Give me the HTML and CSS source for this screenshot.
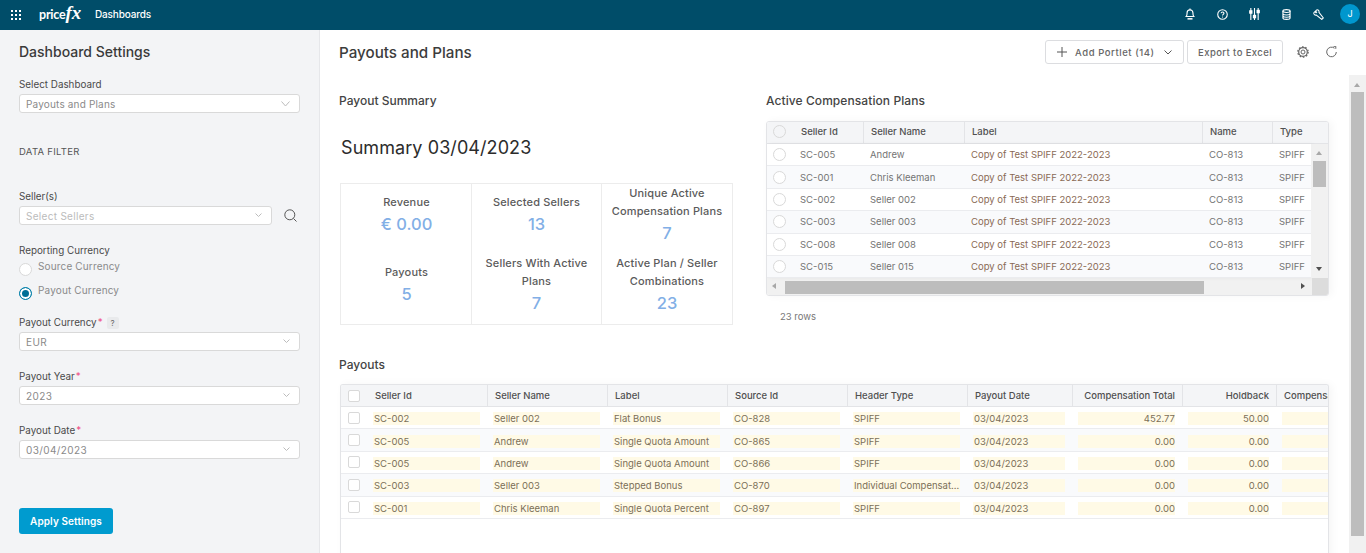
FILE: index.html
```html
<!DOCTYPE html>
<html lang="en">
<head>
<meta charset="utf-8">
<title>Dashboards</title>
<link rel="stylesheet" href="styles.css">
</head>
<body>
<header class="topbar">
  <svg class="apps" width="10" height="10" viewBox="0 0 10 10" fill="#fff"><rect x="0" y="0" width="2" height="2"/><rect x="4" y="0" width="2" height="2"/><rect x="8" y="0" width="2" height="2"/><rect x="0" y="4" width="2" height="2"/><rect x="4" y="4" width="2" height="2"/><rect x="8" y="4" width="2" height="2"/><rect x="0" y="8" width="2" height="2"/><rect x="4" y="8" width="2" height="2"/><rect x="8" y="8" width="2" height="2"/></svg>
  <div class="logo"><span class="logo-a">price</span><span class="logo-b">fx</span></div>
  <div class="nav-title">Dashboards</div>
  <div class="top-icons">
    <span class="ti"><svg width="10" height="12" viewBox="0 0 12 14" fill="none" stroke="#fff" stroke-width="1.400"><path d="M1.500 10c1-1 1-2 1-4.500a3.500 3.500 0 0 1 7 0C9.500 8 9.500 9 10.500 10z"/><path d="M6 2V.5"/><path d="M3 12.800h6" stroke-width="1.800"/></svg></span>
    <span class="ti"><svg width="11" height="11" viewBox="0 0 12 12" fill="none" stroke="#fff" stroke-width="1.200"><circle cx="6" cy="6" r="5.200"/><path d="M4.500 4.700C4.500 3.800 5.200 3.200 6.100 3.200c.9 0 1.500.6 1.500 1.400 0 1.200-1.600 1.300-1.600 2.600"/><path d="M6 8.300v1"/></svg></span>
    <span class="ti"><svg width="11" height="12" viewBox="0 0 12 13" fill="none" stroke="#fff" stroke-width="1.200"><path d="M2 0v13M6 0v13M10 0v13"/><rect x=".8" y="3" width="2.400" height="2.600" fill="#fff"/><rect x="4.800" y="8" width="2.400" height="2.600" fill="#fff"/><rect x="8.800" y="2.500" width="2.400" height="2.600" fill="#fff"/></svg></span>
    <span class="ti"><svg width="9" height="11" viewBox="0 0 10 12" fill="none" stroke="#fff" stroke-width="1.200"><ellipse cx="5" cy="2.200" rx="4" ry="1.600"/><path d="M1 2.200v7.600C1 10.700 2.800 11.400 5 11.400s4-.7 4-1.600V2.200M1 5c0 .9 1.800 1.600 4 1.600S9 5.900 9 5M1 7.500c0 .9 1.800 1.600 4 1.600s4-.7 4-1.600"/></svg></span>
    <span class="ti"><svg width="11" height="11" viewBox="0 0 12 12" fill="none" stroke="#fff" stroke-width="1.100"><path d="M4.300.8 2.800 2.300 4 3.500 3.300 4.200 2 3 .8 4.300C.7 5.800 2 7 3.600 6.600L9.600 11.400 11.300 9.700 6.500 3.600C6.900 2 5.800.7 4.300.8z"/></svg></span>
    <span class="ti"><span class="avatar">J</span></span>
  </div>
</header>

<div class="layout">
  <aside class="side">
    <h2 class="side-title">Dashboard Settings</h2>
    <label class="lbl">Select Dashboard</label>
    <div class="select"><span class="val">Payouts and Plans</span><svg class="chev" width="9" height="6" viewBox="0 0 9 6" fill="none" stroke="#bcbcbc"><path d="M.5.500 4.500 5 8.500.500"/></svg></div>
    <div class="section">DATA FILTER</div>

    <label class="lbl">Seller(s)</label>
    <div class="seller-row">
      <div class="select grow"><span class="val ph">Select Sellers</span><svg class="chev-sm" width="7" height="5" viewBox="0 0 7 5" fill="none" stroke="#bcbcbc"><path d="M.5.500 3.500 3.500 6.500.500"/></svg></div>
      <svg class="search" width="13" height="13" viewBox="0 0 13 13" fill="none" stroke="#555" stroke-width="1"><circle cx="5.800" cy="5.800" r="5"/><path d="M9.500 9.500 12.500 12.500"/></svg>
    </div>

    <label class="lbl lbl-rc">Reporting Currency</label>
    <div class="radio"><span class="dot"></span><span class="radio-t">Source Currency</span></div>
    <div class="radio"><span class="dot on"></span><span class="radio-t">Payout Currency</span></div>

    <label class="lbl lbl-pc">Payout Currency<span class="req">*</span><span class="help">?</span></label>
    <div class="select"><span class="val wide">EUR</span><svg class="chev-sm" width="7" height="5" viewBox="0 0 7 5" fill="none" stroke="#bcbcbc"><path d="M.5.500 3.500 3.500 6.500.500"/></svg></div>
    <label class="lbl lbl-n">Payout Year<span class="req">*</span></label>
    <div class="select"><span class="val wide">2023</span><svg class="chev-sm" width="7" height="5" viewBox="0 0 7 5" fill="none" stroke="#bcbcbc"><path d="M.5.500 3.500 3.500 6.500.500"/></svg></div>
    <label class="lbl lbl-n">Payout Date<span class="req">*</span></label>
    <div class="select"><span class="val wide">03/04/2023</span><svg class="chev-sm" width="7" height="5" viewBox="0 0 7 5" fill="none" stroke="#bcbcbc"><path d="M.5.500 3.500 3.500 6.500.500"/></svg></div>
    <button class="apply">Apply Settings</button>
  </aside>

  <main class="main">
    <div class="content">
      <div class="page-head">
        <h1 class="page-title">Payouts and Plans</h1>
        <div class="actions">
          <button class="btn btn-add"><svg width="10" height="10" viewBox="0 0 10 10" stroke="#555" fill="none"><path d="M5 0v10M0 5h10"/></svg><span>Add Portlet (14)</span><svg width="8" height="5" viewBox="0 0 8 5" stroke="#555" fill="none"><path d="M.5.500 4 4 7.500.500"/></svg></button>
          <button class="btn">Export to Excel</button>
          <svg class="ic-gear" width="12" height="12" viewBox="0 0 12 12" fill="none" stroke="#666"><circle cx="6" cy="6" r="2"/><circle cx="6" cy="6" r="4.300" stroke-width="1.200"/><circle cx="6" cy="6" r="5.200" stroke-width="1.200" stroke-dasharray="1.600 1.670"/></svg>
          <svg class="ic-ref" width="11" height="12" viewBox="0 0 11 12" fill="none" stroke="#666"><path d="M8.500 2.200A4.800 4.800 0 1 0 10.300 6"/><path d="M7.500.3 9.800.3 9.800 2.800"/></svg>
        </div>
      </div>

      <div class="top-grid">
        <section class="left">
          <h3 class="sec-title outdent">Payout Summary</h3>
          <div class="summary-h">Summary 03/04/2023</div>
          <div class="summary">
            <div class="col">
              <div class="stat"><div class="st">Revenue</div><div class="sv">€ 0.00</div></div>
              <div class="stat"><div class="st">Payouts</div><div class="sv">5</div></div>
            </div>
            <div class="col">
              <div class="stat"><div class="st">Selected Sellers</div><div class="sv">13</div></div>
              <div class="stat"><div class="st">Sellers With Active Plans</div><div class="sv">7</div></div>
            </div>
            <div class="col">
              <div class="stat"><div class="st">Unique Active Compensation Plans</div><div class="sv">7</div></div>
              <div class="stat"><div class="st">Active Plan / Seller Combinations</div><div class="sv">23</div></div>
            </div>
          </div>
        </section>

        <section class="right">
          <h3 class="sec-title wide-title">Active Compensation Plans</h3>
          <div class="tbl t1">
            <div class="row head"><div class="c sel"><span class="rd"></span></div><div class="c">Seller Id</div><div class="c">Seller Name</div><div class="c">Label</div><div class="c">Name</div><div class="c last">Type</div></div>
            <div class="t1-mid">
              <div class="rows">
                <div class="row"><div class="c sel"><span class="rd"></span></div><div class="c">SC-005</div><div class="c">Andrew</div><div class="c">Copy of Test SPIFF 2022-2023</div><div class="c">CO-813</div><div class="c last">SPIFF</div></div>
                <div class="row alt"><div class="c sel"><span class="rd"></span></div><div class="c">SC-001</div><div class="c">Chris Kleeman</div><div class="c">Copy of Test SPIFF 2022-2023</div><div class="c">CO-813</div><div class="c last">SPIFF</div></div>
                <div class="row"><div class="c sel"><span class="rd"></span></div><div class="c">SC-002</div><div class="c">Seller 002</div><div class="c">Copy of Test SPIFF 2022-2023</div><div class="c">CO-813</div><div class="c last">SPIFF</div></div>
                <div class="row alt"><div class="c sel"><span class="rd"></span></div><div class="c">SC-003</div><div class="c">Seller 003</div><div class="c">Copy of Test SPIFF 2022-2023</div><div class="c">CO-813</div><div class="c last">SPIFF</div></div>
                <div class="row"><div class="c sel"><span class="rd"></span></div><div class="c">SC-008</div><div class="c">Seller 008</div><div class="c">Copy of Test SPIFF 2022-2023</div><div class="c">CO-813</div><div class="c last">SPIFF</div></div>
                <div class="row alt"><div class="c sel"><span class="rd"></span></div><div class="c">SC-015</div><div class="c">Seller 015</div><div class="c">Copy of Test SPIFF 2022-2023</div><div class="c">CO-813</div><div class="c last">SPIFF</div></div>
              </div>
              <div class="vbar"><i class="up"></i><b class="vthumb"></b><i class="down"></i></div>
            </div>
            <div class="hbar"><div class="htrack"><i class="lt"></i><b class="hthumb"></b><i class="rt"></i></div><div class="corner"></div></div>
          </div>
          <div class="count">23 rows</div>
        </section>
      </div>

      <h3 class="sec-title outdent payouts-title">Payouts</h3>
      <div class="tbl t2">
        <div class="row head"><div class="c sel"><span class="cb"></span></div><div class="c">Seller Id</div><div class="c">Seller Name</div><div class="c">Label</div><div class="c">Source Id</div><div class="c">Header Type</div><div class="c">Payout Date</div><div class="c num">Compensation Total</div><div class="c num">Holdback</div><div class="c last">Compensation</div></div>
        <div class="row"><div class="c sel"><span class="cb"></span></div><div class="c"><span class="y">SC-002</span></div><div class="c"><span class="y">Seller 002</span></div><div class="c"><span class="y">Flat Bonus</span></div><div class="c"><span class="y">CO-828</span></div><div class="c"><span class="y">SPIFF</span></div><div class="c"><span class="y">03/04/2023</span></div><div class="c"><span class="y n">452.77</span></div><div class="c"><span class="y n">50.00</span></div><div class="c last"><span class="y"></span></div></div>
        <div class="row alt"><div class="c sel"><span class="cb"></span></div><div class="c"><span class="y">SC-005</span></div><div class="c"><span class="y">Andrew</span></div><div class="c"><span class="y">Single Quota Amount</span></div><div class="c"><span class="y">CO-865</span></div><div class="c"><span class="y">SPIFF</span></div><div class="c"><span class="y">03/04/2023</span></div><div class="c"><span class="y n">0.00</span></div><div class="c"><span class="y n">0.00</span></div><div class="c last"><span class="y"></span></div></div>
        <div class="row"><div class="c sel"><span class="cb"></span></div><div class="c"><span class="y">SC-005</span></div><div class="c"><span class="y">Andrew</span></div><div class="c"><span class="y">Single Quota Amount</span></div><div class="c"><span class="y">CO-866</span></div><div class="c"><span class="y">SPIFF</span></div><div class="c"><span class="y">03/04/2023</span></div><div class="c"><span class="y n">0.00</span></div><div class="c"><span class="y n">0.00</span></div><div class="c last"><span class="y"></span></div></div>
        <div class="row alt"><div class="c sel"><span class="cb"></span></div><div class="c"><span class="y">SC-003</span></div><div class="c"><span class="y">Seller 003</span></div><div class="c"><span class="y">Stepped Bonus</span></div><div class="c"><span class="y">CO-870</span></div><div class="c"><span class="y">Individual Compensation</span></div><div class="c"><span class="y">03/04/2023</span></div><div class="c"><span class="y n">0.00</span></div><div class="c"><span class="y n">0.00</span></div><div class="c last"><span class="y"></span></div></div>
        <div class="row"><div class="c sel"><span class="cb"></span></div><div class="c"><span class="y">SC-001</span></div><div class="c"><span class="y">Chris Kleeman</span></div><div class="c"><span class="y">Single Quota Percent</span></div><div class="c"><span class="y">CO-897</span></div><div class="c"><span class="y">SPIFF</span></div><div class="c"><span class="y">03/04/2023</span></div><div class="c"><span class="y n">0.00</span></div><div class="c"><span class="y n">0.00</span></div><div class="c last"><span class="y"></span></div></div>
      </div>
    </div>
    <div class="page-scroll"><i class="up"></i><b class="pthumb"></b></div>
  </main>
</div>
</body>
</html>
```

FILE: styles.css
```css
* { box-sizing: border-box; }
html, body { margin: 0; padding: 0; height: 553px; overflow: hidden; }
body { font-family: Inter, "Liberation Sans", sans-serif; font-size: 10px; color: #555; background: #fff; }
h1, h2, h3 { margin: 0; font-weight: 500; }

.topbar { height: 30px; background: #004d69; display: flex; align-items: center; color: #fff; padding-bottom: 2px; }
.apps { margin-left: 11px; margin-top: 1px; }
.logo { margin-left: 18px; width: 41px; display: flex; align-items: baseline; white-space: nowrap; line-height: 16px; }
.logo-a { font-family: Lato, sans-serif; font-weight: 700; font-size: 12.500px; letter-spacing: -.2px; }
.logo-b { font-family: "Liberation Serif", serif; font-style: italic; font-weight: 700; font-size: 19px; }
.nav-title { margin-left: 15px; font-size: 10px; font-weight: 500; letter-spacing: -.15px; }
.top-icons { margin-left: auto; display: flex; align-items: center; }
.ti { width: 32px; display: flex; justify-content: center; align-items: center; }
.avatar { width: 20px; height: 20px; border-radius: 50%; background: #0097ce; font-size: 9px; text-align: center; line-height: 20px; }

.layout { display: flex; height: 523px; }
.side { width: 320px; flex: none; background: #f3f4f6; border-right: 1px solid #e6e7ea; padding: 13px 19px 0 19px; }
.side-title { font-size: 14px; line-height: 17px; color: #3a3a3a; margin-bottom: 18px; }
.lbl { display: block; font-size: 9.850px; line-height: 13px; color: #4a4a4a; margin-bottom: 3px; }
.select { height: 19px; background: #fff; border: 1px solid #d9d9d9; border-radius: 3px; display: flex; align-items: center; justify-content: space-between; padding: 0 6px; }
.val { font-size: 10px; color: #8a8a8a; letter-spacing: .17px; }
.val.wide { letter-spacing: .4px; }
.ph { color: #bbb; letter-spacing: .3px; }
.chev { margin-right: 3px; }
.chev-sm { margin-right: 3px; }
.section { margin-top: 32px; font-size: 9.500px; line-height: 13px; letter-spacing: .3px; color: #555; margin-bottom: 32px; }
.seller-row { display: flex; align-items: center; }
.grow { flex: 1; }
.search { margin: 0 3px 0 12px; flex: none; width: 13px; }
.seller-row .grow { max-width: 253px; }
.lbl-rc { margin-top: 19px; margin-bottom: 0; }
.radio { display: flex; align-items: flex-start; height: 24px; }
.radio-t { font-size: 10px; line-height: 13px; color: #8a8a8a; letter-spacing: .15px; margin-left: 6px; margin-top: 3px; }
.dot { width: 13px; height: 13px; border-radius: 50%; background: #fff; border: 1px solid #d9d9d9; margin-top: 6px; flex: none; }
.dot.on { border-color: #0080ab; box-shadow: inset 0 0 0 2px #fff; background: #006f96; }
.lbl-pc { margin-top: 11px; display: flex; align-items: center; }
.req { color: #ef4d83; margin-left: 1px; }
.help { width: 12px; height: 12px; background: #e9eaec; border-radius: 2px; font-size: 8px; text-align: center; line-height: 12px; margin-left: 4px; color: #666; }
.lbl-n { margin-top: 19px; }
.apply { display: block; margin-top: 49px; width: 94px; height: 26px; background: #009bcf; color: #fff; border: 0; border-radius: 3px; font: 600 10px Inter, sans-serif; letter-spacing: .1px; }

.main { flex: 1; display: flex; min-width: 0; position: relative; }
.content { flex: 1; min-width: 0; padding: 0 37px 0 20px; overflow: hidden; }
.page-head { height: 45px; display: flex; align-items: flex-start; justify-content: space-between; padding-top: 10px; margin-right: -9px; }
.page-title { font-size: 15.200px; line-height: 26px; font-weight: 500; color: #3c3c3c; margin-left: -1px; }
.actions { display: flex; align-items: center; }
.btn { height: 24px; background: #fff; border: 1px solid #dcdde0; border-radius: 3px; font: 500 9.500px Inter, sans-serif; letter-spacing: .4px; color: #666; padding: 0 10px; display: flex; align-items: center; margin-left: 3px; }
.btn-add { width: 139px; padding: 0 11px; gap: 8px; margin-left: 0; letter-spacing: .55px; }
.btn-add svg:last-child { margin-left: 1px; }
.ic-gear { margin-left: 14px; }
.ic-ref { margin-left: 17px; margin-right: 1px; }

.top-grid { display: flex; height: 282px; }
.left { width: 394px; flex: none; margin-top: 19px; }
.right { margin-left: 32px; flex: 1; min-width: 0; margin-top: 19px; }
.sec-title { font-size: 12px; line-height: 14px; font-weight: 500; color: #444; }
.wide-title { letter-spacing: .08px; }
.outdent { margin-left: -1px; }
.summary-h { font-size: 18px; line-height: 24px; color: #2c2c2c; margin-top: 28px; margin-left: 1px; font-weight: 400; letter-spacing: .08px; }
.summary { display: grid; grid-template-columns: 130px 130px 131px; margin-top: 23px; width: 393px; height: 142px; border: 1px solid #ececec; }
.col { border-left: 1px solid #ececec; display: flex; flex-direction: column; }
.col:first-child { border-left: 0; width: 131px; }
.stat { height: 70px; display: flex; flex-direction: column; align-items: center; justify-content: center; text-align: center; padding: 0 5px 12px; }
.st { font-size: 11px; line-height: 18px; font-weight: 500; color: #5b5b5b; letter-spacing: .15px; }
.sv { font-size: 16.500px; line-height: 20px; font-weight: 500; color: #82afe6; margin-top: 3px; }

.tbl { border: 1px solid #e3e4e7; border-radius: 3px; overflow: hidden; background: #fff; box-shadow: 3px 0 8px rgba(0,0,0,.04); }
.row { display: grid; height: 22.400px; border-bottom: 1px solid #ebecef; align-items: center; font-size: 9.500px; color: #747474; }
.row.alt { background: #f9fafc; }
.head { background: #f4f5f7; height: 22px; font-weight: 500; color: #505050; border-bottom: 1px solid #e3e4e7; }
.c { padding-left: 6px; white-space: nowrap; overflow: hidden; height: 100%; display: flex; align-items: center; }
.head .c { border-right: 1px solid #e3e4e7; padding-left: 7px; }
.head .c.sel, .head .c.last { border-right: 0; }
.c.sel, .head .c.sel { padding-left: 6px; }
.rd { width: 13px; height: 13px; border-radius: 50%; border: 1px solid #d9d9d9; background: #fff; flex: none; }
.head .rd { background: #f4f5f7; }
.cb { width: 12px; height: 12px; border-radius: 2px; border: 1px solid #d9d9d9; background: #fff; flex: none; }

.t1 { margin-top: 13px; height: 175px; }
.t1 .row, .t1 .head { grid-template-columns: 27px 70px 101px 238px 70px 1fr; }
.t1 .head .c { padding-bottom: 2px; }
.t1 .c:nth-child(4) { color: #8a6a55; }
.t1 .head .c:nth-child(4) { color: #505050; }
.t1-mid { display: flex; height: 134px; }
.rows { width: 544px; flex: none; overflow: hidden; box-shadow: 2px 0 4px rgba(0,0,0,.05); }
.t1 .rows .row { width: 544px; }
.vbar { flex: 1; background: #f1f1f1; position: relative; padding-top: 17px; }
.vthumb { display: block; width: 13px; height: 26px; margin: 0 auto; background: #bdbdbd; }
.up, .down, .lt, .rt { position: absolute; width: 0; height: 0; }
.up { border: 3.500px solid transparent; border-bottom: 4px solid #a8a8a8; border-top: 0; left: 5px; top: 7px; }
.down { border: 3.500px solid transparent; border-top: 4px solid #505050; border-bottom: 0; left: 5px; bottom: 7px; }
.hbar { display: flex; height: 18px; background: #f1f1f1; }
.htrack { flex: 1; position: relative; display: flex; align-items: center; padding-left: 18px; }
.hthumb { display: block; width: 419px; height: 13px; background: #bdbdbd; }
.lt { border: 3.500px solid transparent; border-right: 4px solid #a8a8a8; border-left: 0; left: 5px; top: 5px; }
.rt { border: 3.500px solid transparent; border-left: 4px solid #505050; border-right: 0; right: 7px; top: 5px; }
.corner { width: 16px; background: #dcdcdc; }
.count { margin-top: 14px; margin-left: 14px; font-size: 9.500px; line-height: 13px; color: #777; }

.payouts-title { margin-top: 1px; }
.t2 { margin-top: 12px; height: 300px; border-bottom: 0; }
.t2 .row { grid-template-columns: 27px 120px 120px 120px 120px 120px 105px 110px 94px 120px; width: 1050px; }
.t2 .c { padding-left: 5px; padding-right: 8px; }
.t2 .head .c { padding-left: 7px; padding-right: 7px; }
.t2 .c.sel, .t2 .head .c.sel { padding-left: 7px; padding-right: 0; }
.y { display: block; width: 100%; height: 13px; line-height: 13px; margin-top: 2px; background: #fffae6; padding-left: 1px; color: #7b6f58; overflow: hidden; text-overflow: ellipsis; white-space: nowrap; }
.y.n { text-align: right; }
.c.num { justify-content: flex-end; }

.page-scroll { position: absolute; right: 0; top: 45px; width: 17px; bottom: 0; background: #f1f1f1; padding-top: 17px; }
.page-scroll .up { left: 5px; top: 8px; }
.pthumb { display: block; width: 13px; height: 444px; margin-left: 2px; background: #bdbdbd; }
```
